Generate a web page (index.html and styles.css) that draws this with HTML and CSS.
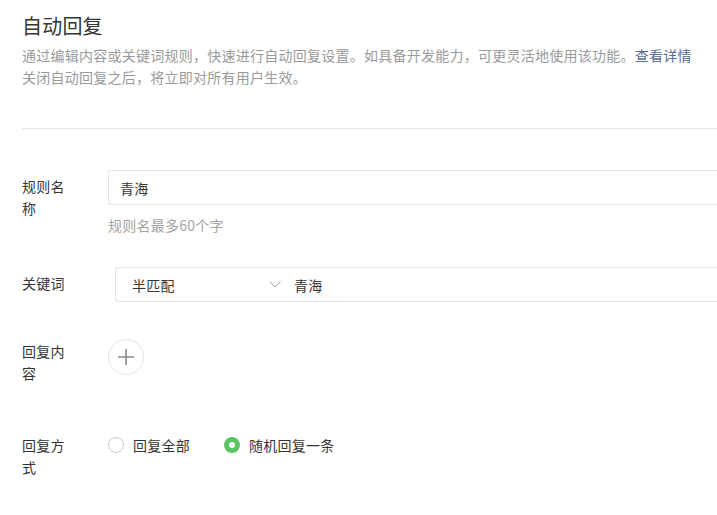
FILE: index.html
```html
<!DOCTYPE html>
<html lang="zh-CN">
<head>
<meta charset="utf-8">
<title>自动回复</title>
<link rel="stylesheet" href="styles.css">
</head>
<body>
<div class="page">
  <header class="head">
    <h1 class="title">自动回复</h1>
    <p class="desc">通过编辑内容或关键词规则，快速进行自动回复设置。如具备开发能力，可更灵活地使用该功能。<a class="link" href="#">查看详情</a><br>关闭自动回复之后，将立即对所有用户生效。</p>
  </header>
  <hr class="divider">
  <form class="form">
    <div class="row row-name">
      <label class="label">规则名称</label>
      <div class="field">
        <div class="input"><span class="value">青海</span></div>
        <p class="hint">规则名最多60个字</p>
      </div>
    </div>
    <div class="row row-key">
      <label class="label">关键词</label>
      <div class="field">
        <div class="input select-input">
          <div class="select">
            <span class="value">半匹配</span>
            <svg class="chev" width="12" height="7" viewBox="0 0 12 7"><path d="M0.5 0.5 L6 6 L11.5 0.5" fill="none" stroke="#a3a3a3" stroke-width="1"/></svg>
          </div>
          <span class="value">青海</span>
        </div>
      </div>
    </div>
    <div class="row row-content">
      <label class="label label-tight">回复内容</label>
      <div class="field">
        <div class="add">
          <svg width="18" height="18" viewBox="0 0 18 18"><path d="M9 1 V17 M1 9 H17" stroke="#8a8a8a" stroke-width="1.6"/></svg>
        </div>
      </div>
    </div>
    <div class="row row-mode">
      <label class="label label-tight">回复方式</label>
      <div class="field radios">
        <span class="radio"><span class="dot"></span>回复全部</span>
        <span class="radio checked"><span class="dot"></span>随机回复一条</span>
      </div>
    </div>
  </form>
</div>
</body>
</html>
```
FILE: styles.css
```css
* { box-sizing: border-box; }
html, body { margin: 0; padding: 0; background: #fff; }
body {
  font-family: "Noto Sans CJK SC", "Noto Sans", "Liberation Sans", sans-serif;
  color: #353535;
  font-size: 14px;
  letter-spacing: 0.25px;
  overflow: hidden;
}
.page { padding: 12px 0 0 22px; width: 740px; }
.title {
  margin: 0;
  font-size: 20px;
  font-weight: 400;
  line-height: 28px;
  color: #353535;
  letter-spacing: 0.2px;
}
.desc {
  margin: 4px 0 0;
  font-size: 14px;
  line-height: 22px;
  color: #9a9a9a;
}
.link { color: #576b95; text-decoration: none; }
.divider {
  margin: 40px 0 0;
  border: 0;
  border-top: 1px solid #e7e7e7;
  height: 0;
}
.form { padding-top: 41px; }
.row { display: flex; align-items: flex-start; }
.label {
  width: 46px;
  margin-right: 40px;
  line-height: 22px;
  padding-top: 5px;
  color: #353535;
}
.label-tight { padding-top: 1px; }
.field { flex: 1; }
.input {
  height: 35px;
  border: 1px solid #e4e4e4;
  border-right: 0;
  border-radius: 3px 0 0 3px;
  padding-left: 11px;
  display: flex;
  align-items: center;
}
.value { line-height: 22px; color: #353535; }
.hint { margin: 9px 0 0; line-height: 22px; color: #a3a3a3; }
.row-key { margin-top: 31px; }
.select-input { margin-left: 7px; padding-left: 16px; }
.select {
  width: 162px;
  display: flex;
  align-items: center;
  justify-content: space-between;
  padding-right: 13px;
}
.chev { display: block; }
.row-content { margin-top: 37px; }
.add {
  width: 36px;
  height: 36px;
  border: 1px solid #e4e4e4;
  border-radius: 50%;
  display: flex;
  align-items: center;
  justify-content: center;
}
.row-mode { margin-top: 49px; }
.radios { display: flex; align-items: center; height: 22px; padding-top: 1px; }
.radio { display: flex; align-items: center; line-height: 22px; margin-right: 34px; }
.dot {
  width: 16px;
  height: 16px;
  border-radius: 50%;
  border: 1px solid #cfcfcf;
  margin-right: 9px;
  background: #fff;
}
.checked .dot {
  border: 5px solid #5ac464;
  background: #fff;
}
```
